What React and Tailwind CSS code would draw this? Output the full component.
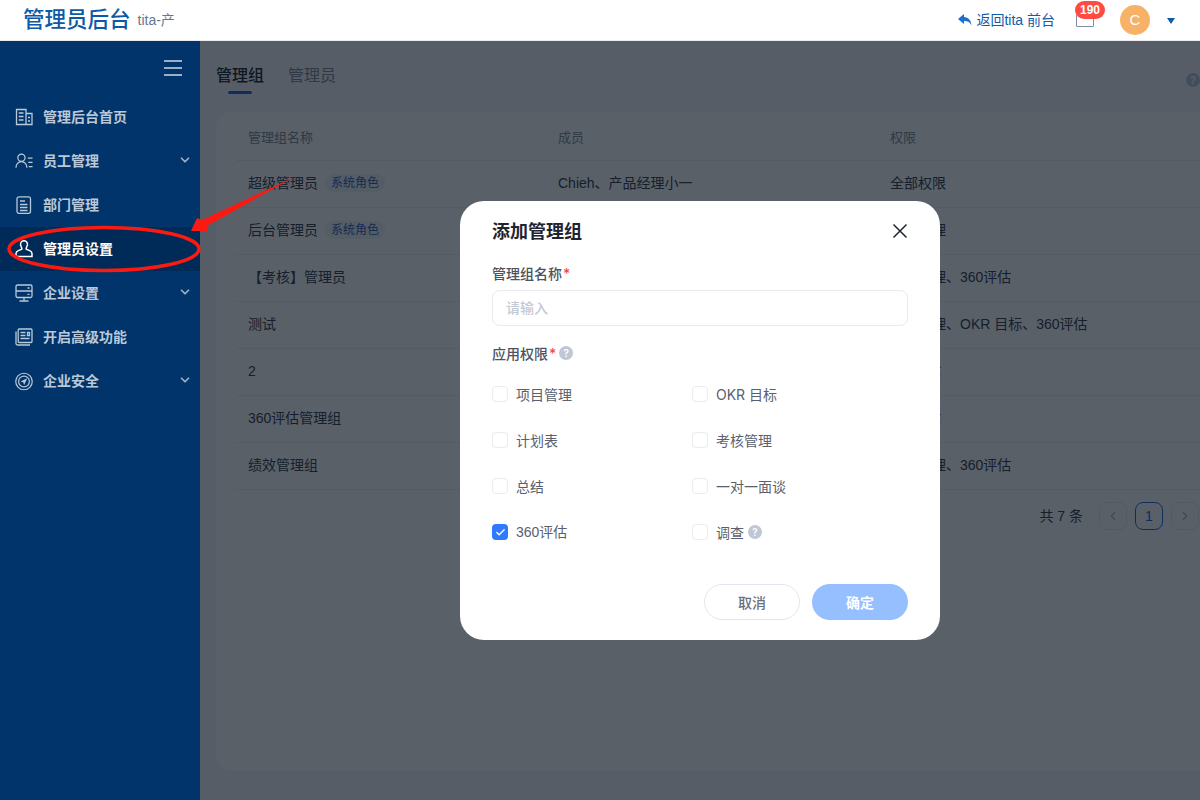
import React from 'react';
import { Check, ChevronLeft, ChevronRight, ChevronDown } from 'lucide-react';

const FONT_HEAD = "font-['Liberation_Sans','Noto_Sans_CJK_SC',sans-serif]";
const FONT_BODY = "font-['Inter','Noto_Sans_CJK_SC',sans-serif]";

function DocIcon() {
  return (
    <svg width="18" height="18" viewBox="0 0 18 18" fill="none" stroke="currentColor" strokeWidth="1.3">
      <path d="M1.500 16.500V1.500h9.500v15zM11 5.500h6v11H1.500M3.800 5h4.700M3.800 8.500h4.700M3.800 12h4.700M13 9.500h2M13 13h2" />
    </svg>
  );
}

function UserIcon() {
  return (
    <svg width="19" height="18" viewBox="0 0 19 18" fill="none" stroke="currentColor" strokeWidth="1.3">
      <circle cx="6.800" cy="5.500" r="3.800" />
      <path d="M1 16c0-3.600 2.500-6.300 5.800-6.300s5.800 2.700 5.800 6.300M13.500 6h5M14 10.500h4.500M14.500 15h4" />
    </svg>
  );
}

function ListIcon() {
  return (
    <svg width="16" height="18" viewBox="0 0 16 18" fill="none" stroke="currentColor" strokeWidth="1.3">
      <rect x="1" y="0.800" width="13.500" height="16.500" rx="2" />
      <path d="M4 5h5M4 8.500h7.500M4 11.500h7.500M4 14.500h7.500" />
    </svg>
  );
}

function AdminIcon() {
  return (
    <svg width="18" height="18" viewBox="0 0 18 18" fill="none" stroke="currentColor" strokeWidth="1.500">
      <path d="M6.800 9.300c.4-1.900-1.300-2.900-1.300-5.100a3.500 3.500 0 0 1 7 0c0 2.200-1.700 3.200-1.300 5.100l3.500 1.300c1.600.6 2.300 1.500 2.300 3v2.900H1v-2.900c0-1.500.7-2.400 2.300-3z" />
    </svg>
  );
}

function ScreenIcon() {
  return (
    <svg width="18" height="18" viewBox="0 0 18 18" fill="none" stroke="currentColor" strokeWidth="1.3">
      <rect x="1" y="1" width="16" height="12.500" rx="1.500" />
      <path d="M1 7h16M12.500 4h2M12.500 10.300h2M9 13.500v3.500M4.500 17h9" />
    </svg>
  );
}

function BookIcon() {
  return (
    <svg width="18" height="18" viewBox="0 0 18 18" fill="none" stroke="currentColor" strokeWidth="1.3">
      <rect x="3.200" y="1" width="13.800" height="13.500" rx="1" />
      <path d="M1 3.500V15.500a1.500 1.500 0 0 0 1.500 1.500H15M5.500 4.500h5M5.500 7.500h5M5.500 10.500h9M12.500 4.500h2v3h-2z" />
    </svg>
  );
}

function ShieldIcon() {
  return (
    <svg width="19" height="19" viewBox="0 0 19 19" fill="none" stroke="currentColor" strokeWidth="1.300">
      <circle cx="9.500" cy="9.500" r="8.700" />
      <circle cx="9.500" cy="9.500" r="5.700" />
      <path d="M13 6 5.800 9.400l2.900 1 .9 2.900z" fill="currentColor" stroke="none" />
    </svg>
  );
}

function HelpDot() {
  return (
    <span className="inline-flex items-center justify-center w-[14px] h-[14px] rounded-full bg-[#bfc7d6] text-[10px] font-semibold text-white">?</span>
  );
}

const menu = [
  { label: '管理后台首页', icon: DocIcon },
  { label: '员工管理', icon: UserIcon, more: true },
  { label: '部门管理', icon: ListIcon },
  { label: '管理员设置', icon: AdminIcon, active: true },
  { label: '企业设置', icon: ScreenIcon, more: true },
  { label: '开启高级功能', icon: BookIcon },
  { label: '企业安全', icon: ShieldIcon, more: true },
];

const rows = [
  { name: '超级管理员', system: true, members: 'Chieh、产品经理小一', rights: '全部权限' },
  { name: '后台管理员', system: true, members: 'Chieh', rights: '后台管理' },
  { name: '【考核】管理员', members: 'Chieh', rights: '考核管理、360评估' },
  { name: '测试', members: 'Chieh', rights: '考核管理、OKR 目标、360评估' },
  { name: '2', members: 'Chieh', rights: '360评估' },
  { name: '360评估管理组', members: 'Chieh', rights: '360评估' },
  { name: '绩效管理组', members: 'Chieh', rights: '考核管理、360评估' },
];

const permissions = [
  { label: '项目管理' },
  { label: 'OKR 目标' },
  { label: '计划表' },
  { label: '考核管理' },
  { label: '总结' },
  { label: '一对一面谈' },
  { label: '360评估', checked: true },
  { label: '调查', help: true },
];

function Sidebar() {
  return (
    <aside className={`w-[200px] shrink-0 bg-[#00346a] text-[#b9c9da] ${FONT_HEAD}`}>
      <div className="h-[54px] flex items-center justify-end pr-[18px]">
        <svg width="18" height="16" viewBox="0 0 18 16" stroke="#cfd9e4" strokeWidth="1.600">
          <path d="M0 1h18M0 8h18M0 15h18" />
        </svg>
      </div>
      {menu.map((item) => {
        const Icon = item.icon;
        return (
          <div
            key={item.label}
            className={`h-[44px] flex items-center pl-[15px] pr-[8px] text-[14px] font-bold ${item.active ? 'bg-[#002b58] text-white' : ''}`}
          >
            <span className="w-[18px] flex justify-center"><Icon /></span>
            <span className="ml-[10px] flex-1">{item.label}</span>
            {item.more && <ChevronDown size={14} strokeWidth={3} className="-mt-[3px] text-[#9db2c9]" />}
          </div>
        );
      })}
    </aside>
  );
}

function GroupTable() {
  return (
    <div className={`flex-1 min-w-[984px] bg-white rounded-tl-[16px] rounded-bl-[16px] ml-[16px] mb-[29px] pl-[20px] ${FONT_HEAD}`}>
      <div className="h-[49px] pl-[12px] pt-[3px] flex items-center text-[13px] text-[#8a909a] border-b border-[#eef0f3]">
        <span className="w-[310px]">管理组名称</span>
        <span className="w-[332px]">成员</span>
        <span>权限</span>
      </div>
      {rows.map((row) => (
        <div key={row.name} className="h-[47px] pl-[12px] pb-[2px] flex items-center text-[14px] text-[#3f4550] border-b border-[#eef0f3]">
          <span className="w-[310px] flex items-center">
            {row.name}
            {row.system && (
              <span className="ml-[7px] h-[18px] px-[6px] rounded-full bg-[#f0f3fa] text-[12px] leading-[18px] text-[#3d68c4]">系统角色</span>
            )}
          </span>
          <span className="w-[332px]">{row.members}</span>
          <span>{row.rights}</span>
        </div>
      ))}
      <div className="h-[54px] pb-[2px] pr-[1px] flex items-center justify-end gap-[8px] text-[14px] text-[#3f4550]">
        <span className="mr-[8px]">共 7 条</span>
        <span className="w-[28px] h-[28px] rounded-[8px] border border-[#eceef2] flex items-center justify-center text-[#b6bbc5]"><ChevronLeft size={14} /></span>
        <span className="w-[28px] h-[28px] rounded-[8px] border border-[#2b6ee6] flex items-center justify-center text-[#2b6ee6]">1</span>
        <span className="w-[28px] h-[28px] rounded-[8px] border border-[#eceef2] flex items-center justify-center text-[#b6bbc5]"><ChevronRight size={14} /></span>
      </div>
    </div>
  );
}

function AddGroupDialog() {
  return (
    <div className={`w-[480px] h-[439px] rounded-[24px] bg-white px-[32px] pt-[19px] ${FONT_BODY}`}>
      <div className="h-[22px] flex items-center justify-between">
        <h3 className="text-[18px] font-semibold text-[#1f2430]">添加管理组</h3>
        <svg width="16" height="16" viewBox="0 0 16 16" fill="none" stroke="#1f2430" strokeWidth="1.500">
          <path d="M1.500 1.500l13 13M14.500 1.500l-13 13" />
        </svg>
      </div>
      <div className="mt-[20px] h-[22px] flex items-center text-[14px] font-medium text-[#4b5260]">
        管理组名称<span className="text-[#f5484d] ml-[1px]">*</span>
      </div>
      <div className="mt-[6px] h-[36px] rounded-[8px] border border-[#e8eaef] pl-[13px] pb-[2px] flex items-center text-[14px] font-medium text-[#c3cad6]">
        请输入
      </div>
      <div className="mt-[15px] h-[24px] flex items-center text-[14px] font-medium text-[#4b5260]">
        应用权限<span className="text-[#f5484d] ml-[1px]">*</span>
        <span className="ml-[3px] flex"><HelpDot /></span>
      </div>
      <div className="mt-[18px] grid grid-cols-[200px_1fr] auto-rows-[46px]">
        {permissions.map((p) => (
          <div key={p.label} className="h-[22px] flex items-center text-[14px] text-[#5a606c]">
            {p.checked ? (
              <span className="w-[16px] h-[16px] rounded-[4px] bg-[#2f7bff] flex items-center justify-center">
                <Check size={11} strokeWidth={3} className="text-white" />
              </span>
            ) : (
              <span className="w-[16px] h-[16px] rounded-[4px] border border-[#e9ebf0]" />
            )}
            <span className={`ml-[8px] ${p.checked ? `${FONT_HEAD} mt-[1px]` : ''}`}>{p.label}</span>
            {p.help && <span className="ml-[4px] flex"><HelpDot /></span>}
          </div>
        ))}
      </div>
      <div className="mt-[17px] flex justify-end gap-[12px]">
        <button className="w-[96px] h-[36px] rounded-full border border-[#e3e6ee] text-[14px] font-medium text-[#6a7080]">取消</button>
        <button className="w-[96px] h-[36px] rounded-full bg-[#96bfff] text-[14px] font-semibold text-white">确定</button>
      </div>
    </div>
  );
}

export default function App() {
  return (
    <div className={`relative w-[1200px] h-[800px] overflow-hidden bg-white ${FONT_HEAD}`}>
      <header className="h-[41px] bg-white border-b border-[#e9ebee] flex items-center pl-[23px] pr-[25px]">
        <span className="mt-[2px] text-[21.5px] font-medium text-[#0c5aa6] leading-none">管理员后台</span>
        <span className="ml-[7px] text-[14px] text-[#66788e]">tita-产</span>
        <div className="ml-auto flex items-center">
          <svg width="14" height="12" viewBox="0 0 14 12" className="text-[#1a6fd0]" fill="currentColor">
            <path d="M6 0 0 5l6 5V7c3.500 0 5.800.8 7.500 4.500C13.300 6.500 10.500 3.200 6 3z" />
          </svg>
          <span className="ml-[4px] text-[14px] text-[#0f5ca8]">返回tita 前台</span>
          <div className="relative ml-[21px] w-[18px] h-[13px] rounded-[1px] border border-[#7e8da0]">
            <span className="absolute -top-[14px] -left-[2px] h-[18px] w-[30px] rounded-full bg-[#ff4b41] text-center text-[12px] font-bold leading-[18px] text-white">190</span>
          </div>
          <span className="ml-[26px] w-[30px] h-[30px] rounded-full bg-[#f7b267] flex items-center justify-center text-[15px] text-white">C</span>
          <span className="ml-[17px] mt-[2px] w-0 h-0 border-x-[4px] border-x-transparent border-t-[6px] border-t-[#0f5ca8]" />
        </div>
      </header>

      <div className="flex h-[759px]">
        <Sidebar />
        <main className="relative flex-1 min-w-0 overflow-hidden bg-[#f6f7f9] flex flex-col">
          <div className="h-[71px] pl-[16px] pt-[23px] flex items-start text-[16px] font-medium text-[#8a909a]">
            <span className="relative text-[#2a3038]">
              管理组
              <span className="absolute left-[12px] -bottom-[6px] w-[24px] h-[3px] rounded-full bg-[#2f6fe0]" />
            </span>
            <span className="ml-[24px] font-normal">管理员</span>
            <span className="absolute right-0 top-[32px] flex"><HelpDot /></span>
          </div>
          <GroupTable />
          {/* dimmed layer and dialog sit above the page content only */}
          <div className="absolute inset-0 bg-[#000a17]/65 flex items-center justify-center">
            <AddGroupDialog />
          </div>
        </main>
      </div>

      {/* hand-drawn red callout around the active menu entry */}
      <svg className="absolute inset-0 pointer-events-none" width="1200" height="800" viewBox="0 0 1200 800" fill="none">
        <ellipse cx="104" cy="249" rx="95" ry="21.500" stroke="#fb1a12" strokeWidth="3.500" />
        <path d="M296 176 202 220 197 218 191 231 208 231 207 226z" fill="#fb1a12" />
      </svg>
    </div>
  );
}
